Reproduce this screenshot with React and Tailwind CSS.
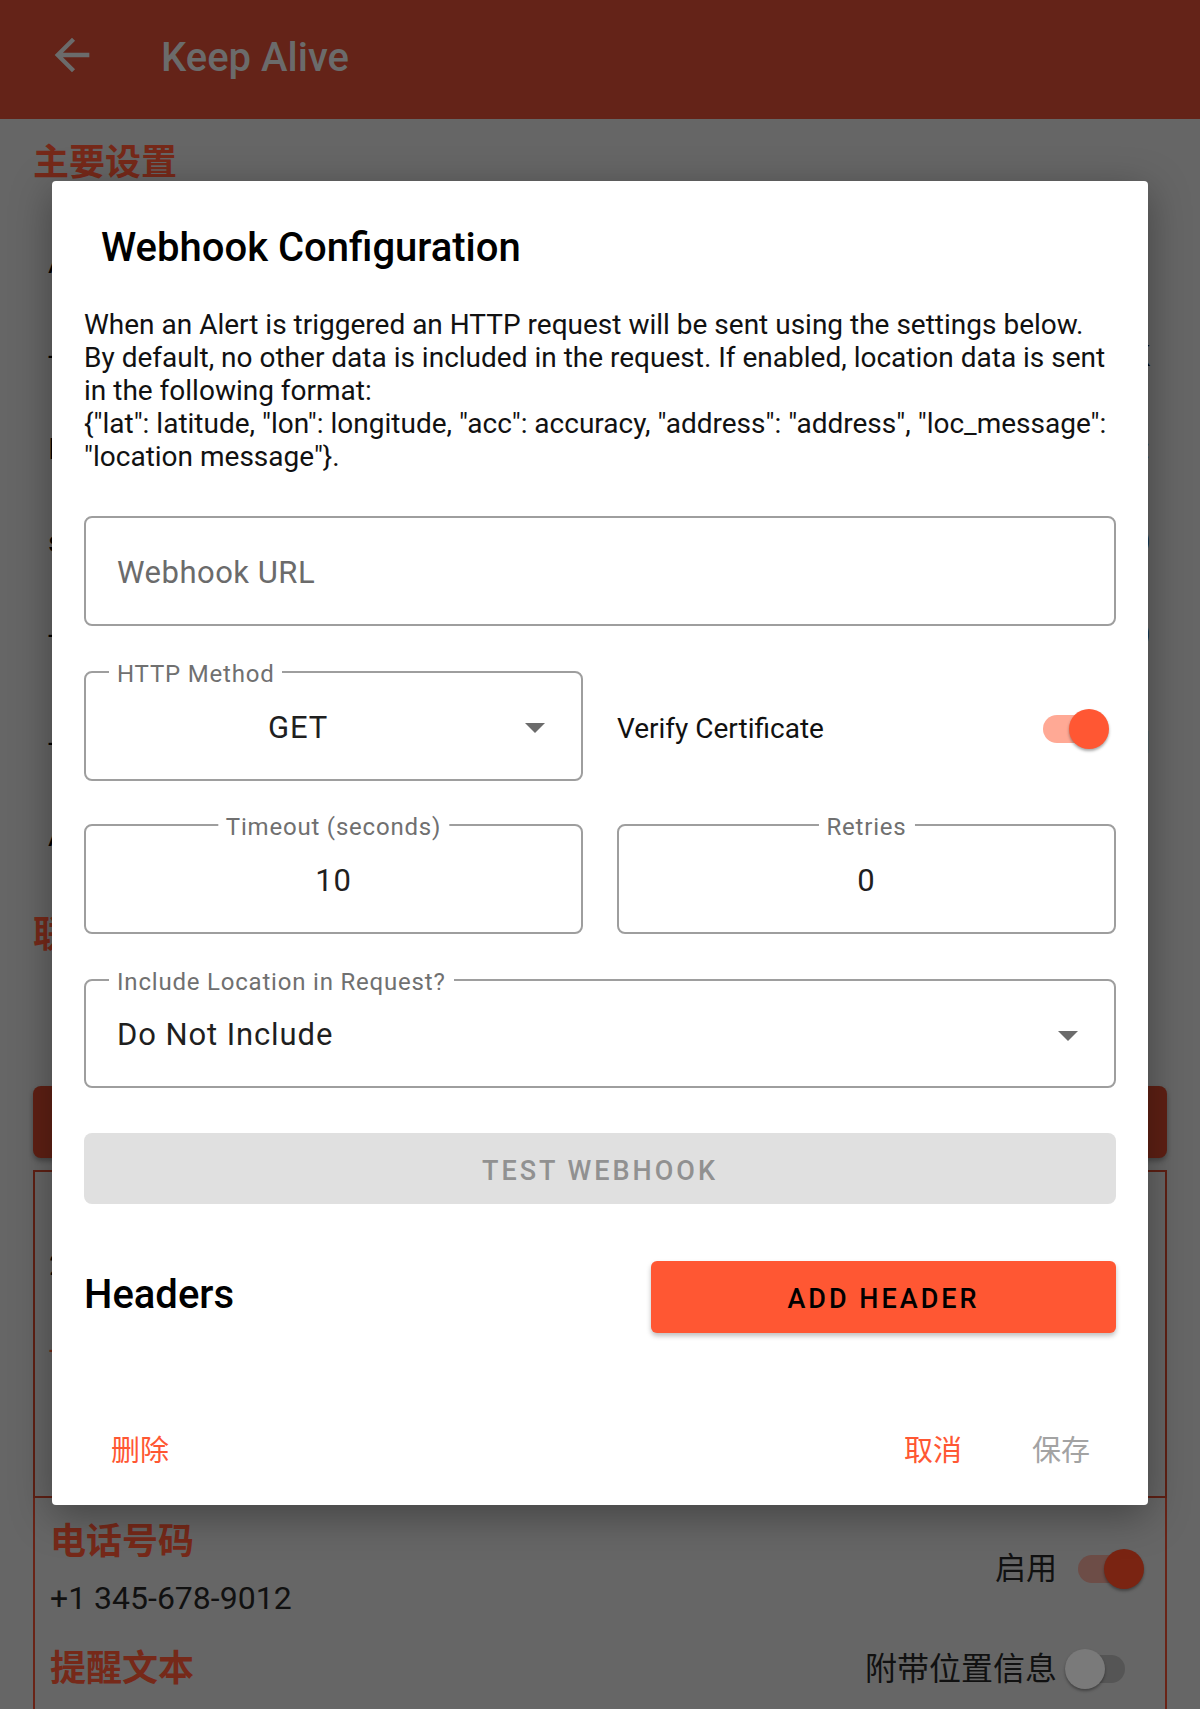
import { useState } from 'react';

const Toggle = ({ on, track, thumb }) => (
    <div className="relative w-[66px] h-[40px] shrink-0">
        <div className={`absolute left-0 top-[6px] w-[60px] h-[28px] rounded-full ${track}`} />
        <div
            className={`absolute top-0 w-[40px] h-[40px] rounded-full shadow-[0_2px_3px_rgba(0,0,0,0.35)] ${thumb} ${on ? 'right-0' : 'left-0'}`}
        />
    </div>
);

const Caret = () => (
    <svg width="20" height="10" viewBox="0 0 20 10" className="shrink-0">
        <polygon points="0,0 20,0 10,10" fill="#6b6b6b" />
    </svg>
);

const FieldLabel = ({ children, center }) => (
    <span
        className={`absolute top-[-11px] px-[8px] bg-white text-[24px] leading-none tracking-[0.8px] text-[#707070] whitespace-nowrap ${center ? 'left-1/2 -translate-x-1/2' : 'left-[23px]'}`}
    >
        {children}
    </span>
);

const bgRows = [
    { left: 'Alert 设置', right: '' },
    { left: '- 无活动时间', right: '12 小时 K' },
    { left: 'I 检查间隔', right: '时间:' },
    { left: 'ste 休息时段', right: '22:00' },
    { left: '- 开始时间', right: '07:00' },
];

const App = () => {
    const [verify, setVerify] = useState(true);

    return (
        <div className="relative min-h-[1709px] overflow-hidden bg-[#666666] font-['Roboto','Noto_Sans_CJK_SC',sans-serif]">
            {/* app bar (dimmed by dialog scrim) */}
            <header className="h-[119px] bg-[#642318] flex items-center">
                <svg width="52" height="52" viewBox="0 0 24 24" className="ml-[46px] -mt-[10px]">
                    <path d="M20 11H7.83l5.59-5.59L12 4l-8 8 8 8 1.41-1.41L7.83 13H20v-2z" fill="#6b6b6b" />
                </svg>
                <h1 className="ml-[63px] -mt-[4px] text-[40px] font-medium text-[#6b6b6b]">Keep Alive</h1>
            </header>

            {/* page behind the dialog */}
            <main className="px-[33px]">
                <h2 className="mt-[26px] text-[36px] leading-none font-bold text-[#762919]">主要设置</h2>
                <div className="mt-[35px] text-[30px] text-black">
                    {bgRows.map((row, i) => (
                        <div key={i} className="h-[93px] pl-[15px] pr-[17px] flex items-center justify-between">
                            <span>{row.left}</span>
                            <span>{row.right}</span>
                        </div>
                    ))}
                    <div className="mt-[15px] h-[93px] pl-[15px] pr-[17px] flex items-center justify-between">
                        <span>- 位置</span>
                        <span>l</span>
                    </div>
                    <div className="h-[93px] pl-[15px] pr-[17px] flex items-center">
                        <span>Alert 消息</span>
                    </div>
                </div>
                <h2 className="mt-[35px] text-[36px] leading-none font-bold text-[#762919]">联系人</h2>
                <div className="mt-[133px] h-[72px] rounded-[8px] bg-[#5f2014] shadow-[0_3px_5px_rgba(0,0,0,0.3)]" />
                <div className="mt-[12px] h-[328px] border-2 border-[#5f2014] pl-[14px] pt-[70px] text-[30px] text-black">
                    <div>2</div>
                    <div className="mt-[40px] text-[#762919]">-</div>
                </div>
                <div className="border-2 border-t-0 border-[#6a2417] pl-[15px] pr-[21px] pt-[26px] pb-[60px]">
                    <div className="flex items-center justify-between">
                        <div>
                            <div className="text-[36px] leading-none font-bold text-[#762919]">电话号码</div>
                            <div className="mt-[22px] text-[32px] leading-none text-[#111]">+1 345-678-9012</div>
                        </div>
                        <div className="flex items-center gap-[21px]">
                            <span className="text-[31px] text-[#111]">启用</span>
                            <Toggle on track="bg-[#6d4d47]" thumb="bg-[#7a2412]" />
                        </div>
                    </div>
                    <div className="mt-[31px] flex items-center justify-between">
                        <div className="text-[36px] leading-none font-bold text-[#762919]">提醒文本</div>
                        <div className="mr-[13px] flex items-center gap-[8px]">
                            <span className="text-[32px] text-[#111]">附带位置信息</span>
                            <Toggle track="bg-[#555555]" thumb="bg-[#7a7a7a]" />
                        </div>
                    </div>
                </div>
            </main>

            {/* webhook dialog */}
            <div className="absolute left-[52px] top-[181px] w-[1096px] h-[1324px] bg-white rounded-[4px] shadow-[0_10px_40px_rgba(0,0,0,0.35)]">
                <h3 className="pt-[45px] pl-[49px] text-[40px] leading-[43px] font-medium text-black">
                    Webhook Configuration
                </h3>
                <div className="px-[32px]">
                    <div className="mt-[39px] text-[28px] leading-[33px] text-[#111] whitespace-nowrap">
                        <div>When an Alert is triggered an HTTP request will be sent using the settings below.</div>
                        <div>By default, no other data is included in the request. If enabled, location data is sent</div>
                        <div>in the following format:</div>
                        <div>{'{"lat": latitude, "lon": longitude, "acc": accuracy, "address": "address", "loc_message":'}</div>
                        <div>{'"location message"}.'}</div>
                    </div>

                    <div className="mt-[43px] h-[110px] border-2 border-[#9e9e9e] rounded-[8px] flex items-center pl-[31px] pt-[4px]">
                        <span className="text-[31px] tracking-[0.5px] text-[#6b6b6b]">Webhook URL</span>
                    </div>

                    <div className="mt-[45px] grid grid-cols-2 gap-[34px]">
                        <div className="relative h-[110px] border-2 border-[#9e9e9e] rounded-[8px] flex items-center pt-[4px]">
                            <FieldLabel>HTTP Method</FieldLabel>
                            <span className="flex-1 text-center text-[31px] tracking-[0.9px] text-[#1f1f1f]">GET</span>
                            <span className="ml-[15px] mr-[36px] flex"><Caret /></span>
                        </div>
                        <div className="flex items-center justify-between pr-[7px] pt-[6px]">
                            <span className="text-[28px] text-[#111]">Verify Certificate</span>
                            <button type="button" onClick={() => setVerify(!verify)}>
                                <Toggle on={verify} track="bg-[#ffa995]" thumb="bg-[#ff5733]" />
                            </button>
                        </div>
                    </div>

                    <div className="mt-[43px] grid grid-cols-2 gap-[34px]">
                        <div className="relative h-[110px] border-2 border-[#9e9e9e] rounded-[8px] flex items-center justify-center pt-[4px]">
                            <FieldLabel center>Timeout (seconds)</FieldLabel>
                            <span className="text-[31px] tracking-[0.9px] text-[#1f1f1f]">10</span>
                        </div>
                        <div className="relative h-[110px] border-2 border-[#9e9e9e] rounded-[8px] flex items-center justify-center pt-[4px]">
                            <FieldLabel center>Retries</FieldLabel>
                            <span className="text-[31px] tracking-[0.9px] text-[#1f1f1f]">0</span>
                        </div>
                    </div>

                    <div className="relative mt-[45px] h-[109px] border-2 border-[#9e9e9e] rounded-[8px] flex items-center pl-[31px] pt-[4px]">
                        <FieldLabel>Include Location in Request?</FieldLabel>
                        <span className="flex-1 text-[31px] tracking-[0.9px] text-[#1f1f1f]">Do Not Include</span>
                        <span className="mr-[36px] flex"><Caret /></span>
                    </div>

                    <button
                        type="button"
                        disabled
                        className="mt-[45px] w-full h-[71px] pt-[5px] rounded-[8px] bg-[#e0e0e0] text-[27px] font-medium tracking-[3px] text-[#919191]"
                    >
                        TEST WEBHOOK
                    </button>

                    <div className="mt-[57px] flex items-center justify-between">
                        <h4 className="pb-[4px] text-[40px] leading-none font-medium text-black">Headers</h4>
                        <button
                            type="button"
                            className="w-[465px] h-[72px] pt-[4px] rounded-[6px] bg-[#ff5733] text-[27px] font-medium tracking-[3px] text-black shadow-[0_3px_5px_rgba(0,0,0,0.25)]"
                        >
                            ADD HEADER
                        </button>
                    </div>

                    <div className="mt-[89px] h-[60px] flex items-center justify-between pl-[27px] pr-[26px] text-[29px]">
                        <button type="button" className="text-[#ff5733]">删除</button>
                        <div className="flex items-center gap-[70px]">
                            <button type="button" className="text-[#ff5733]">取消</button>
                            <button type="button" className="text-[#a3a3a3]">保存</button>
                        </div>
                    </div>
                </div>
            </div>
        </div>
    );
};

export default App;
